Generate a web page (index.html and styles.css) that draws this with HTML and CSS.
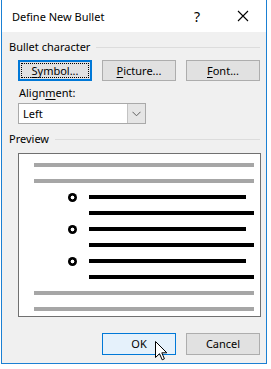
FILE: index.html
```html
<!DOCTYPE html>
<html>
<head>
<meta charset="utf-8">
<link rel="stylesheet" href="styles.css">
</head>
<body>
<div class="window">
  <div class="titlebar">
    <span class="title">Define New Bullet</span>
    <span class="tbtn help">?</span>
    <span class="tbtn close">
      <svg width="12" height="12" viewBox="0 0 12 12"><path d="M1 1 L11 11 M11 1 L1 11" stroke="#000" stroke-width="1.1" fill="none"/></svg>
    </span>
  </div>
  <div class="body">
    <div class="group">
      <span class="glabel">Bullet character</span>
      <span class="gline"></span>
    </div>
    <div class="brow">
      <button class="btn default"><span class="focus"><u>S</u>ymbol...</span></button>
      <button class="btn"><u>P</u>icture...</button>
      <button class="btn"><u>F</u>ont...</button>
    </div>
    <div class="alabel">Align<u>m</u>ent:</div>
    <div class="combo">
      <span class="cval">Left</span>
      <span class="carrow">
        <svg width="9" height="6" viewBox="0 0 9 6"><path d="M0.5 0.8 L4.5 4.8 L8.5 0.8" stroke="#606060" stroke-width="1" fill="none"/></svg>
      </span>
    </div>
    <div class="group preview-group">
      <span class="glabel">Preview</span>
      <span class="gline"></span>
    </div>
    <div class="preview">
      <div class="pl gray"></div>
      <div class="pl gray"></div>
      <div class="prow"><span class="bullet"></span><span class="pl black short"></span></div>
      <div class="pl black full"></div>
      <div class="prow"><span class="bullet"></span><span class="pl black short"></span></div>
      <div class="pl black full"></div>
      <div class="prow"><span class="bullet"></span><span class="pl black short"></span></div>
      <div class="pl black full"></div>
      <div class="pl gray"></div>
      <div class="pl gray last"></div>
    </div>
    <div class="footer">
      <button class="btn ok">OK
        <svg class="cursor" width="13" height="20" viewBox="0 0 13 20"><path d="M0.5 0.5 L0.5 16.5 L4.5 12.7 L7.2 18.8 L9.4 17.8 L6.8 11.8 L11.8 11.8 Z" fill="#fff" stroke="#000" stroke-width="1" stroke-linejoin="miter"/></svg>
      </button>
      <button class="btn">Cancel</button>
    </div>
  </div>
</div>
</body>
</html>
```
FILE: styles.css
```css
html, body {
  margin: 0;
  padding: 0;
  background: #ffffff;
}
body {
  font-family: "Noto Sans", "DejaVu Sans", sans-serif;
  font-size: 11px;
  color: #000;
}
.window {
  margin-left: 1px;
  width: 266px;
  height: 364px;
  box-sizing: border-box;
  border: 1px solid #1b80d3;
  border-top: none;
  display: flex;
  flex-direction: column;
}
.titlebar {
  height: 32px;
  background: #ffffff;
  display: flex;
  align-items: center;
  flex-shrink: 0;
}
.title {
  flex: 1;
  padding-left: 10px;
  font-size: 11px;
  line-height: 16px;
  margin-top: 2px;
}
.tbtn {
  width: 46px;
  height: 32px;
  display: flex;
  align-items: center;
  justify-content: center;
}
.help {
  font-size: 14px;
}
.body {
  flex: 1;
  background: #f0f0f0;
  padding: 7px 0 0 0;
}
.group {
  display: flex;
  align-items: center;
  height: 16px;
  padding-left: 7px;
}
.glabel {
  line-height: 16px;
}
.gline {
  flex: 1;
  height: 1px;
  background: #dcdcdc;
  margin: 0 6px 0 6px;
}
.brow {
  display: flex;
  gap: 10px;
  margin-top: 5px;
  padding-left: 16px;
}
.btn {
  width: 74px;
  height: 21px;
  box-sizing: border-box;
  background: #e1e1e1;
  border: 1px solid #adadad;
  font-family: inherit;
  font-size: 11px;
  color: #000;
  padding: 0;
  margin: 0;
  display: flex;
  align-items: center;
  justify-content: center;
  line-height: 16px;
}
.btn u, .alabel u {
  text-decoration-thickness: 1px;
  text-underline-offset: 2px;
}
.default {
  border: 2px solid #0078d7;
  position: relative;
}
.default .focus {
  position: absolute;
  left: 1px;
  top: 1px;
  right: 1px;
  bottom: 1px;
  border: 1px dotted #000;
  display: flex;
  align-items: center;
  justify-content: center;
}
.alabel {
  margin-top: 4px;
  padding-left: 17px;
  line-height: 16px;
}
.combo {
  margin: 2px 0 0 16px;
  width: 128px;
  height: 21px;
  box-sizing: border-box;
  border: 1px solid #a9a9a9;
  background: #fff;
  display: flex;
  align-items: stretch;
}
.cval {
  flex: 1;
  padding-left: 4px;
  display: flex;
  align-items: center;
}
.carrow {
  width: 17px;
  background: #e5e5e5;
  border-left: 1px solid #c3c3c3;
  display: flex;
  align-items: center;
  justify-content: center;
}
.preview-group {
  margin-top: 7px;
}
.preview {
  margin: 6px 0 0 16px;
  width: 243px;
  height: 164px;
  box-sizing: border-box;
  border: 1px solid #707070;
  background: #fff;
  padding: 9px 0 0 15px;
}
.pl {
  height: 4px;
  margin-bottom: 12px;
}
.gray {
  width: 220px;
  background: #a6a6a6;
}
.black {
  background: #000;
}
.full {
  width: 165px;
  margin-left: 55px;
}
.prow {
  display: flex;
  align-items: center;
  height: 4px;
  margin-bottom: 12px;
}
.prow .pl {
  margin-bottom: 0;
}
.bullet {
  width: 9px;
  height: 9px;
  border-radius: 50%;
  background: radial-gradient(circle, #fff 0 1.6px, #000 2.2px);
  margin-left: 34px;
  flex-shrink: 0;
}
.short {
  width: 157px;
  margin-left: 12px;
}
.footer {
  display: flex;
  justify-content: flex-end;
  gap: 10px;
  margin-top: 16px;
  padding-right: 6px;
}
.footer .btn {
  height: 22px;
}
.ok {
  background: #e5f1fb;
  border: 1px solid #0078d7;
  position: relative;
}
.cursor {
  position: absolute;
  left: 52px;
  top: 7px;
}
```
